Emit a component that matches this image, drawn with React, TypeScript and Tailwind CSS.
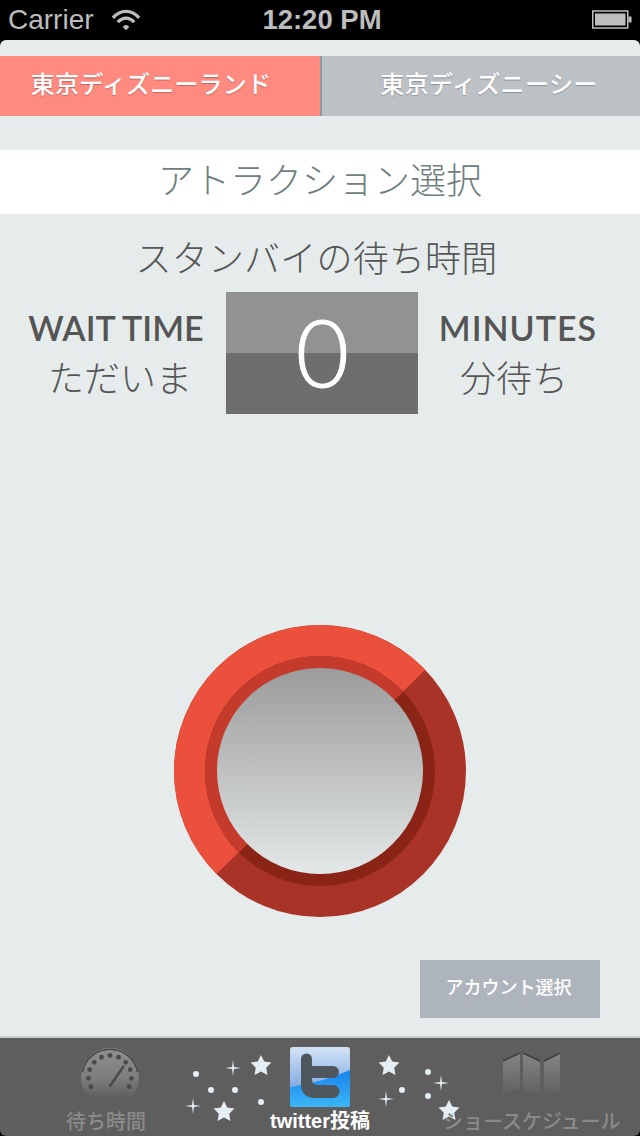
const jp = "font-['Noto_Sans_CJK_JP',sans-serif]";

function Wifi() {
  return (
    <svg width="32" height="24" viewBox="0 0 28 22" fill="none" stroke="#bdbdbd" strokeWidth="3">
      <path d="M2 9 C9 1 19 1 26 9" />
      <path d="M6.500 13 C11 8 17 8 21.500 13" />
      <path d="M11 17.500 L14 20.500 L17 17.500 C15.500 15 12.500 15 11 17.500Z" fill="#bdbdbd" stroke="none" />
    </svg>
  );
}

function Battery() {
  return (
    <svg width="40" height="20" viewBox="0 0 40 20">
      <rect x="0.750" y="1" width="35" height="17" fill="none" stroke="#bdbdbd" strokeWidth="1.500" />
      <rect x="3" y="3.500" width="30.500" height="12" fill="#bdbdbd" />
      <rect x="36.500" y="6.500" width="3" height="6" fill="#bdbdbd" />
    </svg>
  );
}

function Gauge() {
  const dots = Array.from({ length: 11 }, (_, i) => {
    const a = ((153 + 23.400 * i) * Math.PI) / 180;
    return [29 + 21.500 * Math.cos(a), 29 + 21.500 * Math.sin(a)];
  });
  return (
    <svg width="58" height="50" viewBox="0 0 58 50">
      <defs>
        <linearGradient id="g" x1="0" y1="0" x2="0" y2="1">
          <stop offset="0" stopColor="#8f8f8f" />
          <stop offset="0.6" stopColor="#7d7d7d" />
          <stop offset="1" stopColor="#5e5e5e" />
        </linearGradient>
      </defs>
      <path d="M0 29 A29 29 0 0 1 58 29 C58 38 55 44 50 50 L8 50 C3 44 0 38 0 29Z" fill="url(#g)" />
      <path d="M1.500 24 A28 28 0 0 1 56.500 24" fill="none" stroke="#474747" strokeWidth="1.500" />
      {dots.map(([x, y], i) => (
        <circle key={i} cx={x} cy={y} r="2.400" fill="#4a4a4a" />
      ))}
      <path d="M29 38 L42.300 18.700" stroke="#4a4a4a" strokeWidth="2.500" strokeLinecap="round" />
    </svg>
  );
}

function MapIcon() {
  return (
    <svg width="58" height="44" viewBox="0 0 58 44">
      <defs>
        <linearGradient id="m" x1="0" y1="0" x2="0" y2="1">
          <stop offset="0" stopColor="#858585" />
          <stop offset="1" stopColor="#5e5e5e" />
        </linearGradient>
      </defs>
      <path d="M0 8 L17 0 V36 L0 42Z M20 0 L37 8 V44 L20 36Z M41 8 L57 0 V36 L41 44Z" fill="url(#m)" />
      <path d="M0 8 L17 0 M20 0 L37 8 M41 8 L57 0" stroke="#3c3c3c" strokeWidth="1.500" />
    </svg>
  );
}

function TwitterIcon() {
  return (
    <svg width="60" height="60" viewBox="0 0 60 60">
      <defs>
        <linearGradient id="t" x1="0" y1="0" x2="0" y2="1">
          <stop offset="0" stopColor="#d3e3f4" />
          <stop offset="0.7" stopColor="#7fa9e2" />
        </linearGradient>
        <linearGradient id="t2" x1="0" y1="0" x2="0" y2="1">
          <stop offset="0" stopColor="#1583ec" />
          <stop offset="1" stopColor="#3cb6f6" />
        </linearGradient>
      </defs>
      <rect width="60" height="60" rx="3" fill="url(#t)" />
      <path d="M0 40 Q30 36 60 23 V57 A3 3 0 0 1 57 60 H3 A3 3 0 0 1 0 57Z" fill="url(#t2)" />
      <path
        d="M11 12 A5.500 5.500 0 0 1 22 12 V19 H43 A6 6 0 0 1 43 31 H22 V33 A5 5 0 0 0 27 38 H43 A6.500 6.500 0 0 1 43 51 H25 C16 51 11 46 11 37Z"
        fill="#50565d"
      />
    </svg>
  );
}

function Star({ x, y, r }: { x: number; y: number; r: number }) {
  const pts = Array.from({ length: 10 }, (_, i) => {
    const a = (-90 + 36 * i) * (Math.PI / 180);
    const rad = i % 2 === 0 ? r : r * 0.5;
    return `${x + rad * Math.cos(a)},${y + rad * Math.sin(a)}`;
  }).join(" ");
  return <polygon points={pts} fill="#e4eff5" />;
}

function Spark({ x, y, r }: { x: number; y: number; r: number }) {
  const s = r * 0.12;
  return (
    <polygon
      points={`${x},${y - r} ${x + s},${y - s} ${x + r},${y} ${x + s},${y + s} ${x},${y + r} ${x - s},${y + s} ${x - r},${y} ${x - s},${y - s}`}
      fill="#e4eff5"
    />
  );
}

function Dot({ x, y }: { x: number; y: number }) {
  return <circle cx={x} cy={y} r="3" fill="#e4eff5" />;
}

function Sparkles() {
  return (
    <svg className="absolute left-0 top-0" width="640" height="98" viewBox="0 1038 640 98">
      <Star x={261} y={1066} r={11} />
      <Star x={224} y={1112} r={11} />
      <Spark x={233} y={1068} r={8} />
      <Spark x={193} y={1106} r={8} />
      <Dot x={196} y={1074} />
      <Dot x={211} y={1090} />
      <Dot x={235} y={1090} />
      <Dot x={261} y={1102} />
      <Star x={389} y={1066} r={11} />
      <Star x={449} y={1111} r={11} />
      <Spark x={441} y={1083} r={8} />
      <Spark x={386} y={1099} r={8} />
      <Dot x={428} y={1072} />
      <Dot x={402} y={1090} />
      <Dot x={428} y={1096} />
    </svg>
  );
}

function Dial() {
  return (
    <div className="relative h-[292px] w-[292px] overflow-hidden rounded-full bg-[#a83326]">
      <div className="absolute inset-0 bg-[#eb503d] [clip-path:polygon(0%_0%,100%_0%,100%_1.7%,0%_99.500%)]" />
      <div className="absolute inset-[31px] overflow-hidden rounded-full bg-[#8a2417]">
        <div className="absolute inset-0 bg-[#c43a2b] [clip-path:polygon(0%_0%,100%_0%,100%_2%,0%_100%)]" />
      </div>
      <div className="absolute inset-[43px] rounded-full bg-gradient-to-b from-[#9b9b9b] to-[#e4e8e9]" />
    </div>
  );
}

export default function App() {
  return (
    <div className={`flex h-[1136px] w-[640px] flex-col overflow-hidden bg-black ${jp}`}>
      <header className="flex h-10 shrink-0 items-center justify-between pl-2 pr-2 font-['Liberation_Sans',sans-serif] text-[28px] leading-none text-[#bdbdbd]">
        <div className="flex w-[200px] items-center gap-4">
          <span>Carrier</span>
          <Wifi />
        </div>
        <span className="ml-1 text-[27.500px] font-bold">12:20 PM</span>
        <div className="flex w-[200px] justify-end">
          <Battery />
        </div>
      </header>

      <main className="flex min-h-0 flex-1 flex-col rounded-t-md bg-[#e6ecec]">
        <div className="mt-4 flex h-[60px] shrink-0 text-[24px] font-medium leading-none tracking-[0.2px] text-white">
          <div className="flex w-[322px] items-center justify-center border-r-2 border-[#8d9a9b] bg-[#ff8a80] pr-[18px] pb-[6px] [text-shadow:0_1px_1px_rgba(0,0,0,0.25)]">
            東京ディズニーランド
          </div>
          <div className="flex w-[318px] items-center justify-center bg-[#bcc1c6] pl-[16px] pb-[6px] tracking-[0.4px] [text-shadow:0_1px_1px_rgba(0,0,0,0.25)]">
            東京ディズニーシー
          </div>
        </div>

        <div className="mt-[34px] flex h-16 shrink-0 items-center justify-center bg-white pb-2 text-[36px] font-light leading-none text-[#6f8080]">
          アトラクション選択
        </div>

        <div className="mt-[22px] pr-[7px] text-center text-[36px] font-light leading-[40px] tracking-[0.2px] text-[#555]">
          スタンバイの待ち時間
        </div>

        <div className="mt-4 flex h-[122px] shrink-0 justify-between text-[#555]">
          <div className="flex w-[226px] flex-col items-center pl-[6px] pt-4">
            <span className="font-['Lato',sans-serif] text-[34px] font-semibold leading-[40px]">WAIT TIME</span>
            <span className="mt-2 pl-2 text-[36px] font-light leading-[40px]">ただいま</span>
          </div>
          <div className="relative w-[192px] bg-gradient-to-b from-[#929292] from-50% to-[#6e6e6e] to-50%">
            <span className="absolute inset-0 flex items-center justify-center pb-[2px] pl-[1px] font-['Lato',sans-serif] text-[92px] font-light leading-none text-white [-webkit-text-stroke:1px_white]">
              0
            </span>
          </div>
          <div className="flex w-[222px] flex-col items-center pr-[22px] pt-4">
            <span className="font-['Lato',sans-serif] text-[34px] font-semibold leading-[40px] tracking-[1px]">MINUTES</span>
            <span className="mt-2 pr-2 text-[36px] font-light leading-[40px]">分待ち</span>
          </div>
        </div>

        <div className="flex flex-1 justify-center pt-[211px]">
          <Dial />
        </div>

        <div className="flex justify-end pr-10 pb-[18px]">
          <div className="flex h-[58px] w-[180px] items-center justify-center bg-[#aeb4bc] pr-[3px] pb-[6px] text-[18px] font-medium leading-none text-white">
            アカウント選択
          </div>
        </div>
      </main>

      <nav className="relative flex h-[100px] shrink-0 rounded-b-md border-t-2 border-[#c9cdcd] bg-[#5e5e5e]">
        <Sparkles />
        <div className="absolute left-[81px] top-[10px]">
          <Gauge />
        </div>
        <div className="absolute left-[66px] top-[73px] text-[20px] font-medium leading-none whitespace-nowrap text-[#8a8a8a]">待ち時間</div>
        <div className="absolute left-[290px] top-[9px]">
          <TwitterIcon />
        </div>
        <div className="absolute left-[270px] top-[73px] font-['Liberation_Sans','Noto_Sans_CJK_JP',sans-serif] text-[20px] font-bold leading-none whitespace-nowrap text-white">twitter投稿</div>
        <div className="absolute left-[503px] top-[15px]">
          <MapIcon />
        </div>
        <div className="absolute left-[443px] top-[73px] text-[20px] font-medium leading-none whitespace-nowrap text-[#8a8a8a]">ショースケジュール</div>
      </nav>
    </div>
  );
}
